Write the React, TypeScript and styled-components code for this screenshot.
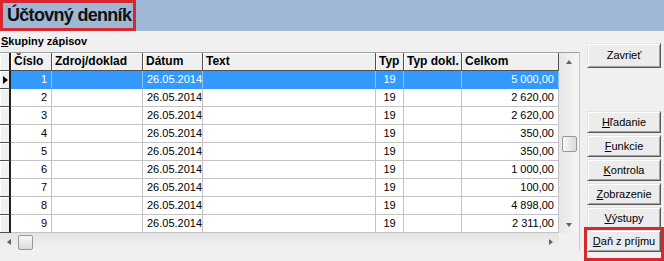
import React from "react";
import styled, { createGlobalStyle } from "styled-components";

const GlobalStyle = createGlobalStyle`
    html, body {
        margin: 0;
        padding: 0;
        background: #f0f0f0;
        overflow: hidden;
    }
    * {
        box-sizing: border-box;
    }
`

const COLS = "11px 41px 91px 60px 173px 28px 58px 97px";

const Window = styled.div`
    width: 664px;
    height: 261px;
    display: flex;
    flex-direction: column;
    background: #f0f0f0;
    font-family: "Liberation Sans", Arial, sans-serif;
    font-size: 11px;
    color: #000;
`

const TitleBar = styled.div`
    height: 31px;
    flex: none;
    background: #9fb8d5;
    display: flex;
`

const TitleBox = styled.div`
    width: 136px;
    height: 31px;
    border: 3px solid #d9262f;
    padding-left: 4px;
    font-size: 18px;
    font-weight: bold;
    letter-spacing: -0.7px;
    line-height: 25px;
    color: #111;
    white-space: nowrap;
`

const Body = styled.div`
    flex: 1;
    display: flex;
`

const Main = styled.div`
    width: 580px;
    display: flex;
    flex-direction: column;
`

const SectionLabel = styled.div`
    height: 21px;
    padding: 4px 0 0 1px;
    line-height: 13px;
    font-weight: bold;
    font-size: 11px;
`

const GridFrame = styled.div`
    display: grid;
    grid-template-columns: 559px 20px;
    grid-template-rows: 180px 18px;
    border-top: 1px solid #a0a0a0;
    border-right: 1px solid #c8c8c8;
`

const Table = styled.div`
    display: flex;
    flex-direction: column;
    background: #fff;
    overflow: hidden;
`

const Row = styled.div`
    display: grid;
    grid-template-columns: ${COLS};
    height: 18px;
`

const HeadCell = styled.div<{ $first?: boolean }>`
    height: 18px;
    background: #f0f0f0;
    border-right: ${p => (p.$first ? "2px solid #202020" : "1px solid #505050")};
    border-bottom: 1px solid #505050;
    box-shadow: inset 1px 1px #fff;
    padding: 0 3px;
    font-weight: bold;
    font-size: 12px;
    line-height: 17px;
    white-space: nowrap;
    overflow: hidden;
`

const Indicator = styled.div`
    height: 18px;
    background: #f0f0f0;
    border-right: 2px solid #202020;
    border-bottom: 1px solid #505050;
    box-shadow: inset 1px 1px #fff;
    display: flex;
    align-items: center;
    padding-left: 3px;
`

const Pointer = styled.span`
    width: 0;
    height: 0;
    border-top: 4.5px solid transparent;
    border-bottom: 4.5px solid transparent;
    border-left: 5px solid #000;
`

const Cell = styled.div<{ $align?: string; $selected?: boolean }>`
    height: 18px;
    border-right: 1px solid ${p => (p.$selected ? "#8cc3fb" : "#c4c4c4")};
    border-bottom: 1px solid ${p => (p.$selected ? "#3399ff" : "#c4c4c4")};
    background: ${p => (p.$selected ? "#3399ff" : "#fff")};
    color: ${p => (p.$selected ? "#fff" : "#000")};
    text-align: ${p => p.$align || "left"};
    padding: 0 4px;
    line-height: 17px;
    white-space: nowrap;
    overflow: hidden;
`

const VScroll = styled.div`
    grid-column: 2;
    grid-row: 1;
    display: flex;
    flex-direction: column;
    background: linear-gradient(to right, #e6e6e6, #f6f6f6);
`

const HScroll = styled.div`
    grid-column: 1;
    grid-row: 2;
    display: flex;
    background: linear-gradient(to bottom, #e4e4e4, #f3f3f3);
`

const Corner = styled.div`
    grid-column: 2;
    grid-row: 2;
    background: #f0f0f0;
`

const ArrowBox = styled.div<{ $horizontal?: boolean }>`
    flex: none;
    width: ${p => (p.$horizontal ? "17px" : "100%")};
    height: ${p => (p.$horizontal ? "100%" : "17px")};
    display: flex;
    align-items: center;
    justify-content: center;
`

const Arrow = styled.span<{ $dir: "up" | "down" | "left" | "right" }>`
    width: 0;
    height: 0;
    ${p =>
        p.$dir === "up"
            ? "border-left: 3.5px solid transparent; border-right: 3.5px solid transparent; border-bottom: 4px solid #606060;"
            : p.$dir === "down"
            ? "border-left: 3.5px solid transparent; border-right: 3.5px solid transparent; border-top: 4px solid #606060;"
            : p.$dir === "left"
            ? "border-top: 3.5px solid transparent; border-bottom: 3.5px solid transparent; border-right: 4px solid #606060;"
            : "border-top: 3.5px solid transparent; border-bottom: 3.5px solid transparent; border-left: 4px solid #606060;"}
`

const Track = styled.div<{ $horizontal?: boolean }>`
    flex: 1;
    display: flex;
    flex-direction: ${p => (p.$horizontal ? "row" : "column")};
    align-items: center;
`

const Thumb = styled.div<{ $horizontal?: boolean }>`
    width: ${p => (p.$horizontal ? "15px" : "15px")};
    height: ${p => (p.$horizontal ? "15px" : "16px")};
    border: 1px solid #979797;
    border-radius: 2px;
    background: linear-gradient(${p => (p.$horizontal ? "to bottom" : "to right")}, #f8f8f8, #dadada);
`

const Side = styled.div`
    flex: 1;
    display: flex;
    flex-direction: column;
    padding: 12px 3px 0 7px;
`

const ButtonStack = styled.div`
    flex: 1;
    display: flex;
    flex-direction: column;
    gap: 2px;
    margin-top: 43px;
`

const Button = styled.div<{ $tall?: boolean }>`
    width: 74px;
    height: ${p => (p.$tall ? "25px" : "22px")};
    flex: none;
    display: flex;
    align-items: center;
    justify-content: center;
    background: #ececec;
    border: 1px solid;
    border-color: #e4e4e4 #5a5a5a #5a5a5a #e4e4e4;
    box-shadow: inset 1px 1px #fff, inset -1px -1px #a0a0a0;
    font-size: 11px;
    white-space: nowrap;
    padding-bottom: 1px;
`

const Highlight = styled.div`
    flex: 1;
    margin: -4px -3px 0 -3px;
    border: 3px solid #d9262f;
`

type Entry = { no: number; total: string };

const entries: Entry[] = [
    { no: 1, total: "5 000,00" },
    { no: 2, total: "2 620,00" },
    { no: 3, total: "2 620,00" },
    { no: 4, total: "350,00" },
    { no: 5, total: "350,00" },
    { no: 6, total: "1 000,00" },
    { no: 7, total: "100,00" },
    { no: 8, total: "4 898,00" },
    { no: 9, total: "2 311,00" },
];

export default function App() {
    return (
        <Window>
            <GlobalStyle />
            <TitleBar>
                <TitleBox>Účtovný denník</TitleBox>
            </TitleBar>
            <Body>
                <Main>
                    <SectionLabel><u>S</u>kupiny zápisov</SectionLabel>
                    <GridFrame>
                        <Table>
                            <Row>
                                <HeadCell $first />
                                <HeadCell>Číslo</HeadCell>
                                <HeadCell>Zdroj/doklad</HeadCell>
                                <HeadCell>Dátum</HeadCell>
                                <HeadCell>Text</HeadCell>
                                <HeadCell>Typ</HeadCell>
                                <HeadCell>Typ dokl.</HeadCell>
                                <HeadCell>Celkom</HeadCell>
                            </Row>
                            {entries.map(e => {
                                const sel = e.no === 1;
                                return (
                                    <Row key={e.no}>
                                        <Indicator>{sel && <Pointer />}</Indicator>
                                        <Cell $selected={sel} $align="right">{e.no}</Cell>
                                        <Cell $selected={sel} />
                                        <Cell $selected={sel}>26.05.2014</Cell>
                                        <Cell $selected={sel} />
                                        <Cell $selected={sel} $align="center">19</Cell>
                                        <Cell $selected={sel} />
                                        <Cell $selected={sel} $align="right">{e.total}</Cell>
                                    </Row>
                                );
                            })}
                        </Table>
                        <VScroll>
                            <ArrowBox><Arrow $dir="up" /></ArrowBox>
                            <Track>
                                <Thumb style={{ marginTop: 66 }} />
                            </Track>
                            <ArrowBox><Arrow $dir="down" /></ArrowBox>
                        </VScroll>
                        <HScroll>
                            <ArrowBox $horizontal><Arrow $dir="left" /></ArrowBox>
                            <Track $horizontal>
                                <Thumb $horizontal style={{ marginLeft: 1 }} />
                            </Track>
                            <ArrowBox $horizontal><Arrow $dir="right" /></ArrowBox>
                        </HScroll>
                        <Corner />
                    </GridFrame>
                </Main>
                <Side>
                    <Button $tall>Zavrieť</Button>
                    <ButtonStack>
                        <Button><u>H</u>ľadanie</Button>
                        <Button><u>F</u>unkcie</Button>
                        <Button><u>K</u>ontrola</Button>
                        <Button><u>Z</u>obrazenie</Button>
                        <Button><u>V</u>ýstupy</Button>
                        <Highlight>
                            <Button><u>D</u>aň z príjmu</Button>
                        </Highlight>
                    </ButtonStack>
                </Side>
            </Body>
        </Window>
    );
}
